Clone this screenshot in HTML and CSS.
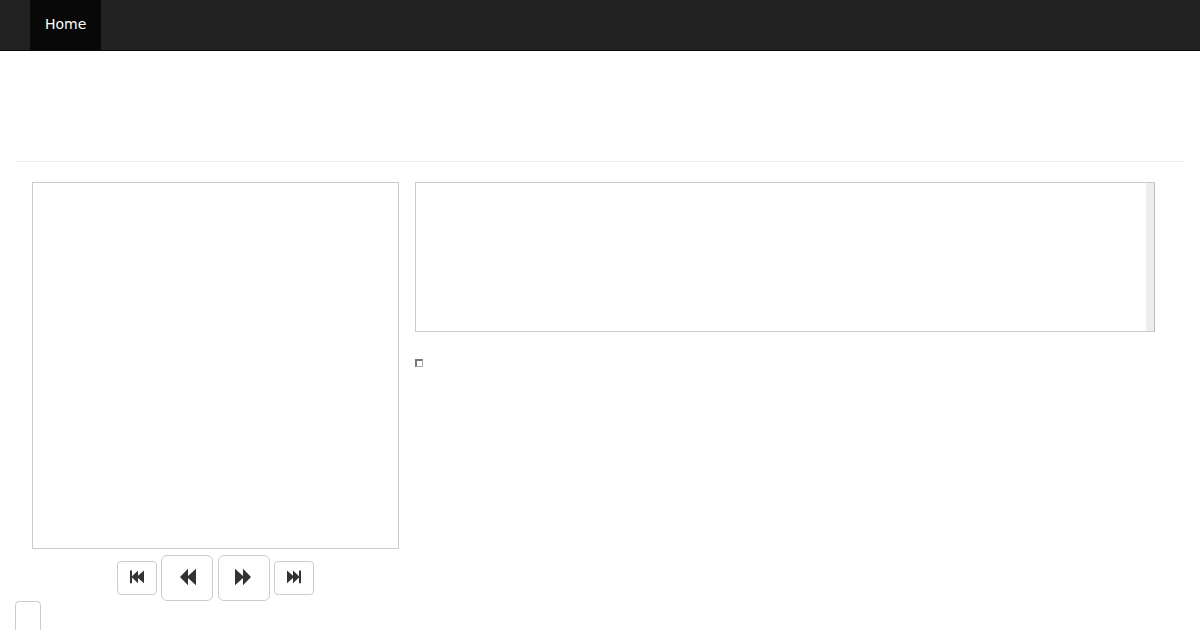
FILE: index.html
```
<!DOCTYPE html>
<html lang="en">
<head>
    <meta charset="UTF-8">
    <meta name="viewport" content="width=device-width, initial-scale=1.0">
    <title>Home</title>
    <link rel="stylesheet" href="styles.css">
</head>
<body>
    <nav class="navbar">
        <a class="nav-link active" href="#">Home</a>
    </nav>

    <main class="container">
        <header class="page-header"></header>

        <div class="viewer">
            <section class="board-column">
                <div class="board"></div>
                <div class="controls">
                    <button type="button" class="btn" aria-label="First move">
                        <svg width="14" height="14" viewBox="0 0 14 14"><path d="M0 .5h2v5.8l6-5.8v5.2l6-5.2v12.8l-6-5.2v5.2l-6-5.8v5.8h-2z"/></svg>
                    </button>
                    <button type="button" class="btn btn-lg" aria-label="Previous move">
                        <svg width="18" height="18" viewBox="0 0 18 18"><path d="M2 9l8-8.2v7.2l8-7.2v16.4l-8-7.2v7.2z"/></svg>
                    </button>
                    <button type="button" class="btn btn-lg" aria-label="Next move">
                        <svg width="18" height="18" viewBox="0 0 18 18"><path d="M16 9l-8-8.2v7.2l-8-7.2v16.4l8-7.2v7.2z"/></svg>
                    </button>
                    <button type="button" class="btn" aria-label="Last move">
                        <svg width="14" height="14" viewBox="0 0 14 14"><path d="M14 .5h-2v5.8l-6-5.8v5.2l-6-5.2v12.8l6-5.2v5.2l6-5.8v5.8h2z"/></svg>
                    </button>
                </div>
            </section>

            <section class="notes-column">
                <div class="moves"></div>
                <div class="marker"></div>
            </section>
        </div>

        <button type="button" class="btn" aria-label="Options"></button>
    </main>
</body>
</html>
```

FILE: styles.css
```
* {
    box-sizing: border-box;
}

body {
    margin: 0;
    background: #fff;
    color: #333;
    font-family: "DejaVu Sans", sans-serif;
    font-size: 14px;
    line-height: 20px;
}

.navbar {
    display: flex;
    min-height: 51px;
    padding: 0 30px;
    background: #222;
    border-bottom: 1px solid #080808;
}

.nav-link {
    padding: 14px 15px 16px;
    color: #fff;
    text-decoration: none;
}

.nav-link.active {
    background: #080808;
}

.container {
    padding: 0 15px;
}

.page-header {
    height: 111px;
    margin-bottom: 20px;
    border-bottom: 1px solid #eee;
}

.viewer {
    display: grid;
    grid-template-columns: minmax(0, 367px) minmax(0, 1fr);
    gap: 16px;
    padding: 0 30px 0 17px;
}

.board {
    aspect-ratio: 1;
    border: 1px solid #ccc;
}

.controls {
    padding-top: 6px;
    text-align: center;
    white-space: nowrap;
}

.btn {
    display: inline-block;
    height: 34px;
    padding: 6px 12px;
    background: #fff;
    border: 1px solid #ccc;
    border-radius: 4px;
    color: #333;
    font: inherit;
    vertical-align: middle;
    cursor: pointer;
}

.btn-lg {
    height: 46px;
    padding: 10px 16px;
    border-radius: 6px;
}

.btn svg {
    display: block;
    margin-bottom: 2px;
    fill: currentColor;
}

.moves {
    height: 150px;
    margin-bottom: 27px;
    border: 1px solid #ccc;
    border-right-color: #bbb;
    background: linear-gradient(#eee, #eee) right / 8px 100% no-repeat;
}

.marker {
    width: 8px;
    height: 8px;
    border: 1px solid #aaa;
    border-top: 2px solid #777;
    border-left: 2px solid #777;
}
```
